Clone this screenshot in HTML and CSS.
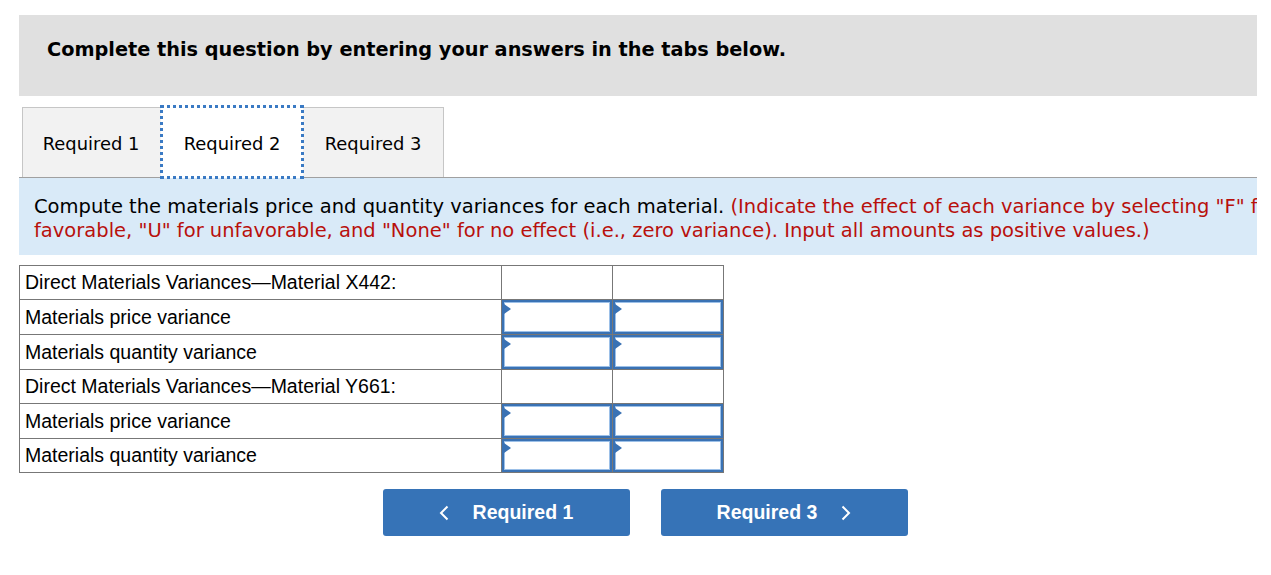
FILE: index.html
```html
<!DOCTYPE html>
<html>
<head>
<meta charset="utf-8">
<link rel="stylesheet" href="styles.css">
</head>
<body>
<div class="page">
  <div class="header">Complete this question by entering your answers in the tabs below.</div>
  <div class="tabs">
    <div class="tab">Required 1</div>
    <div class="tab active">Required 2</div>
    <div class="tab">Required 3</div>
  </div>
  <div class="prompt">
    <div class="prompt-text">Compute the materials price and quantity variances for each material. <span class="red">(Indicate the effect of each variance by selecting "F" for favorable, "U" for unfavorable, and "None" for no effect (i.e., zero variance). Input all amounts as positive values.)</span></div>
  </div>
  <table class="grid">
    <tr><td class="label">Direct Materials Variances—Material X442:</td><td class="cell"></td><td class="cell"></td></tr>
    <tr><td class="label">Materials price variance</td><td class="cell in"><div class="box"></div></td><td class="cell in"><div class="box"></div></td></tr>
    <tr><td class="label">Materials quantity variance</td><td class="cell in"><div class="box"></div></td><td class="cell in"><div class="box"></div></td></tr>
    <tr><td class="label">Direct Materials Variances—Material Y661:</td><td class="cell"></td><td class="cell"></td></tr>
    <tr><td class="label">Materials price variance</td><td class="cell in"><div class="box"></div></td><td class="cell in"><div class="box"></div></td></tr>
    <tr class="last"><td class="label">Materials quantity variance</td><td class="cell in"><div class="box"></div></td><td class="cell in"><div class="box"></div></td></tr>
  </table>
  <div class="nav">
    <button class="btn"><svg class="chev" width="10" height="16" viewBox="0 0 10 16"><path d="M8.5 1.5 L2 8 L8.5 14.5" fill="none" stroke="#fff" stroke-width="2"/></svg><span>Required 1</span></button>
    <button class="btn"><span>Required 3</span><svg class="chev" width="10" height="16" viewBox="0 0 10 16"><path d="M1.5 1.5 L8 8 L1.5 14.5" fill="none" stroke="#fff" stroke-width="2"/></svg></button>
  </div>
</div>
</body>
</html>
```
FILE: styles.css
```css
html, body { margin: 0; padding: 0; background: #fff; }
.page { padding: 15px 14px 0 19px; }
.header {
  background: #e0e0e0;
  height: 81px;
  box-sizing: border-box;
  padding: 21px 0 0 28px;
  font-family: "DejaVu Sans", Verdana, sans-serif;
  font-weight: bold;
  font-size: 19.3px;
  line-height: 27px;
  color: #000;
}
.tabs {
  display: flex;
  margin-top: 11px;
  padding-left: 3px;
  border-bottom: 1px solid #a0a0a0;
  height: 70px;
}
.tab {
  box-sizing: border-box;
  height: 70px;
  display: flex;
  align-items: center;
  justify-content: center;
  background: #f2f2f2;
  border: 1px solid #c6c6c6;
  border-bottom: none;
  font-family: "DejaVu Sans", Verdana, sans-serif;
  font-size: 17.9px;
  color: #000;
  padding-top: 2px;
}
.tab:nth-child(1) { width: 139px; border-right: none; padding-right: 2px; }
.tab:nth-child(2) { width: 142px; }
.tab:nth-child(3) { width: 141px; border-left: none; }
.tab.active {
  background: #fff;
  border: none;
  outline: 3px dotted #3a7ac4;
  outline-offset: -2px;
  height: 72px;
  margin-top: -1px;
  position: relative;
  z-index: 1;
}
.prompt {
  background: #d9eaf8;
  height: 77px;
  box-sizing: border-box;
  padding: 17px 0 0 15px;
  overflow: hidden;
}
.prompt-text {
  width: 1280px;
  font-family: "DejaVu Sans", Verdana, sans-serif;
  font-size: 19.5px;
  line-height: 24px;
  color: #000;
}
.prompt-text .red { color: #b8100c; }
.grid {
  margin-top: 10px;
  border-collapse: collapse;
  font-family: "Liberation Sans", Arial, sans-serif;
  font-size: 19.5px;
  color: #000;
}
.grid td {
  border: 1px solid #777;
  height: 34px;
  padding: 0;
  box-sizing: border-box;
}
.grid tr.last td { height: 33px; }
.grid td.label { width: 482px; padding-left: 5px; }
.grid td.cell { width: 111px; }
.grid td.in { padding: 0; position: relative; }
.box {
  position: relative;
  height: 34px;
  box-sizing: border-box;
  border: 2px solid #3a72b4;
  box-shadow: inset 0 0 0 1px #9cc0e8;
}
.grid tr.last .box { height: 33px; }
.box::before {
  content: "";
  position: absolute;
  left: 0;
  top: 2px;
  border-left: 7px solid #3a72b4;
  border-top: 5px solid transparent;
  border-bottom: 5px solid transparent;
}
.nav {
  display: flex;
  justify-content: center;
  gap: 31px;
  margin-top: 16px;
  padding-left: 14px;
}
.btn {
  width: 247px;
  height: 47px;
  background: #3673b7;
  border: none;
  border-radius: 3px;
  color: #fff;
  font-family: "Liberation Sans", Arial, sans-serif;
  font-weight: bold;
  font-size: 19.5px;
  display: flex;
  align-items: center;
  justify-content: center;
  gap: 24px;
  padding: 0;
}
.chev { display: block; }
```
